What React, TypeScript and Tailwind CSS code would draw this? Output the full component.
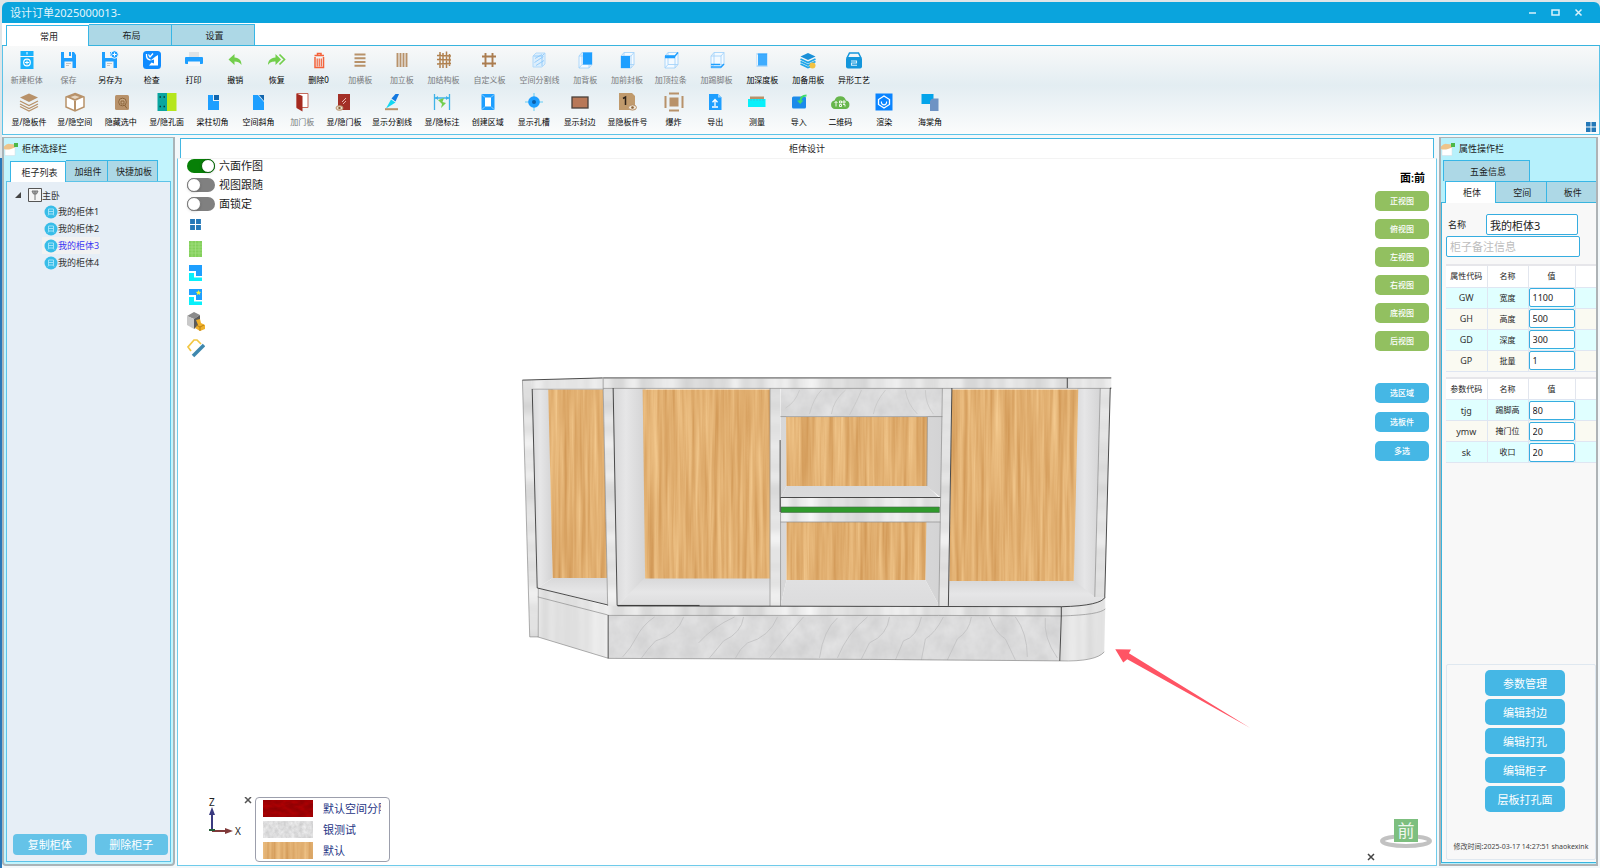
import { useState } from 'react'
import type { ReactNode } from 'react'
import clsx from 'clsx'

type Tool = {
  label: string
  icon: ReactNode
  size?: 'md' | 'lg' | 'xl' | 'xxl'
  disabled?: boolean
}

const BLUE = '#1e9fff'
const TAN = '#b8926a'

const cube = (
  <path
    d="M4 6h10v12H4zM7 2.500h10v12H7zM4 6l3-3.500M14 6l3-3.500M14 18l3-3.500M4 18l3-3.500"
    fill="#f4faff"
    stroke="#a5d4fb"
    strokeWidth="0.900"
  />
)

const floppy = (
  <>
    <path d="M2 2h3v6h8V2h2l2 3v13H2z" fill={BLUE} />
    <path d="M5.500 11.500h8V18h-8z" fill="#f5f5f5" />
    <path d="M7 13.500h5M7 15.500h3" stroke="#b5b5b5" strokeWidth="0.800" />
    <path d="M10 2h2v4h-2z" fill={BLUE} />
  </>
)

const topTools: Tool[] = [
  {
    label: '新建柜体',
    disabled: true,
    icon: (
      <>
        <path d="M3.500 1h13v5h-13zM3.500 7h13v12h-13z" fill="#1ab1fb" />
        <path d="M10 2v2.500" stroke="#fff" />
        <circle cx="10" cy="12.500" r="3.300" fill="none" stroke="#fff" strokeWidth="1.200" />
        <path d="M10 10.500v4M8 12.500h4" stroke="#fff" />
      </>
    ),
  },
  { label: '保存', disabled: true, icon: floppy },
  {
    label: '另存为',
    icon: (
      <>
        {floppy}
        <circle cx="14.500" cy="4.500" r="3.800" fill={BLUE} stroke="#f0f8ff" />
        <path d="M14.500 2.500v4M12.500 4.500h4" stroke="#fff" />
      </>
    ),
  },
  {
    label: '检查',
    icon: (
      <>
        <rect x="1" y="1" width="18" height="18" rx="3.500" fill="#0f8bff" />
        <path d="M4.500 4q-.500 5.500 4 6M6.500 4.500l1.500 2.500 3-3.500" fill="none" stroke="#fff" strokeWidth="1.300" />
        <path d="m8.500 10.500 5-4 2.500-1.500v10.500H7l2.500-3 2.500 1V9.500z" fill="#fff" />
      </>
    ),
  },
  {
    label: '打印',
    icon: (
      <>
        <path d="M5 2h10v5H5z" fill="#dfe3e6" />
        <rect x="1" y="7" width="18" height="7" rx="1" fill={BLUE} />
        <path d="M4 11.500h12V16H4z" fill="#f5f7f9" />
      </>
    ),
  },
  { label: '撤销', icon: <path d="M3.500 9.500 9.500 4v3.500c5 .500 7 3 7 7.500-2-3-4-3.500-7-3.500V15z" fill="#72ce4c" /> },
  {
    label: '恢复',
    icon: (
      <>
        <path d="M14 9.500 8.500 4v3.500c-5 .500-7.500 3-7.500 7.500 2-3 4-3.500 7.500-3.500V15z" fill="#72ce4c" />
        <path d="m12.500 4.500 5 5-5 5" fill="none" stroke="#72ce4c" strokeWidth="1.700" />
      </>
    ),
  },
  {
    label: '删除0',
    icon: (
      <>
        <path d="M6 7v10.500h8.500V7M5.500 5.500h9.500M8.500 5V3.500h3.500v1.500" fill="none" stroke="#f4623a" strokeWidth="1.500" />
        <path d="M8.200 8.500v8M10.250 8.500v8M12.300 8.500v8" stroke="#f4623a" strokeWidth="1.200" />
      </>
    ),
  },
  { label: '加横板', disabled: true, icon: <path d="M4.500 4.500h11M4.500 8.200h11M4.500 12h11M4.500 15.700h11" stroke={TAN} strokeWidth="1.900" /> },
  { label: '加立板', disabled: true, icon: <path d="M5.500 3v14M8.500 3v14M11.500 3v14M14.500 3v14" stroke={TAN} strokeWidth="1.900" /> },
  {
    label: '加结构板',
    disabled: true,
    icon: <path d="M3 5.500 17 6M3 9.500l14 .500M3 14l14-.500M6 2v16M9 3v15M12.500 1.500V18M15.500 4v12" stroke="#b0814f" strokeWidth="1.500" />,
  },
  { label: '自定义板', size: 'xl', disabled: true, icon: <path d="M6.500 3v14M13.500 3v14M3 6.500h14M3 13.500h14" stroke="#ab7d50" strokeWidth="1.900" /> },
  {
    label: '空间分割线',
    size: 'xl',
    disabled: true,
    icon: (
      <>
        <path d="M4 6l3-3h9v11l-3 3H4z" fill="#dceefc" stroke="#b3dafa" />
        <path d="M6 8.500l7-4M5.500 12.500l9-6M7 15.500l8-5M13 6v10M4.500 6H13l2.500-2.500" stroke="#8cc8fa" strokeWidth="0.900" />
      </>
    ),
  },
  {
    label: '加背板',
    disabled: true,
    icon: (
      <>
        {cube}
        <path d="M8 2.500h9v12H8z" fill={BLUE} />
      </>
    ),
  },
  {
    label: '加前封板',
    disabled: true,
    icon: (
      <>
        {cube}
        <path d="M4 6h9v12H4z" fill={BLUE} />
      </>
    ),
  },
  {
    label: '加顶拉条',
    size: 'lg',
    disabled: true,
    icon: (
      <>
        {cube}
        <path d="M4 6h10l3-3.500M4 7.500h10" fill="none" stroke={BLUE} strokeWidth="1.300" />
      </>
    ),
  },
  {
    label: '加踢脚板',
    size: 'lg',
    disabled: true,
    icon: (
      <>
        {cube}
        <path d="M4 17h10l3-3M4 14.500h9" fill="none" stroke={BLUE} strokeWidth="1.300" />
      </>
    ),
  },
  {
    label: '加深度板',
    size: 'lg',
    icon: (
      <>
        <path d="M4 3h12v2H4zM4 15h12v2H4z" fill="#b9dcf8" />
        <path d="M6 3.500h9v12H6z" fill={BLUE} opacity="0.850" />
        <path d="M4.500 3v14M15.500 3v14" stroke="#cfe7fa" />
      </>
    ),
  },
  {
    label: '加备用板',
    size: 'lg',
    icon: (
      <>
        <path d="m10 3 7.500 3.500-7.500 3.500L2.500 6.500z" fill="#1a90d8" />
        <path d="m2.500 9 7.500 3.500L17.500 9M2.500 11.500 10 15l7.500-3.500M2.500 14 10 17.500l5-2" fill="none" stroke="#1ea6e8" strokeWidth="1.700" />
        <circle cx="14.500" cy="15.500" r="3" fill="#f3c242" />
      </>
    ),
  },
  {
    label: '异形工艺',
    size: 'lg',
    icon: (
      <>
        <rect x="2" y="7" width="16" height="11.500" rx="2" fill="#1496db" />
        <path d="M3 8 5.500 3h9L17 8" fill="none" stroke="#1496db" strokeWidth="1.500" />
        <path d="M7 11h5.500v2H7.500v2.300H13" fill="none" stroke="#d8effb" strokeWidth="1.100" />
      </>
    ),
  },
]

const bottomTools: Tool[] = [
  {
    label: '显/隐板件',
    size: 'lg',
    icon: (
      <>
        <path d="m10 1.500 9 4-9 4.500-9-4.500z" fill={TAN} />
        <path d="m1 9 9 4.500L19 9M1 12l9 4.500 9-4.500M1 14.500 10 19l9-4.500" fill="none" stroke={TAN} strokeWidth="1.300" />
      </>
    ),
  },
  {
    label: '显/隐空间',
    size: 'lg',
    icon: (
      <>
        <path d="m10 1.500 9 3.500v10l-9 4-9-4V5z" fill="#fff" stroke={TAN} strokeWidth="1.500" />
        <path d="m10 1.500 9 3.500-9 4-9-4z" fill={TAN} />
        <path d="M10 9v10" stroke={TAN} strokeWidth="2" />
        <path d="m10 3.500 4.500 1.500L10 7 5.500 5z" fill="#e6d5c0" />
      </>
    ),
  },
  {
    label: '隐藏选中',
    size: 'lg',
    icon: (
      <>
        <rect x="4" y="3" width="14" height="15" rx="1.500" fill={TAN} />
        <circle cx="11.500" cy="10" r="3.800" fill="#c9a984" stroke="#8a6238" />
        <path d="m13.500 13 2.500 3.500M10 9v3h3V9z" stroke="#8a6238" fill="none" />
      </>
    ),
  },
  {
    label: '显/隐孔面',
    size: 'lg',
    icon: (
      <>
        <path d="M.500 1H10v18H.500z" fill="#0aa5a0" />
        <path d="M10 1h9.500v18H10z" fill="#b5e61d" />
        <path d="M2.500 5H4M6.500 5H8M2.500 14.500H4M6.500 14.500H8" stroke="#063c3a" strokeWidth="1.500" />
      </>
    ),
  },
  {
    label: '梁柱切角',
    size: 'lg',
    icon: (
      <>
        <path d="M5 3h5v6h6v9H5z" fill={BLUE} />
        <path d="M11 3h5v5h-5z" fill="#1266ad" />
      </>
    ),
  },
  {
    label: '空间斜角',
    size: 'lg',
    icon: (
      <>
        <path d="M5 3h5l6 7v8H5z" fill={BLUE} />
        <path d="M11 3h5v6z" fill="#1266ad" />
      </>
    ),
  },
  {
    label: '加门板',
    disabled: true,
    icon: (
      <>
        <path d="M5 1.500h11v14H5z" fill="#fff" stroke="#c46a5c" />
        <path d="M4.500 1.500 10.500 4v15.500L4.500 16z" fill="#a52a20" />
      </>
    ),
  },
  {
    label: '显/隐门板',
    icon: (
      <>
        <path d="M4 2h12v16H4z" fill="#a33027" />
        <path d="m8 10 4-4M9 12l3-3" stroke="#e6b5ae" />
        <ellipse cx="5.500" cy="16" rx="3.500" ry="2.300" fill="#e9ddcc" stroke={TAN} />
        <circle cx="5.500" cy="16" r="1.200" fill="#8a6238" />
      </>
    ),
  },
  {
    label: '显示分割线',
    size: 'xxl',
    icon: (
      <>
        <path d="M4 16.500 9 7.500l4.500 3z" fill="#13d8f2" />
        <path d="m9.500 6.500 4-4.500H17l-3.500 7.500z" fill="#1278e0" />
        <path d="M3 17.200h13" stroke={TAN} strokeWidth="2" />
      </>
    ),
  },
  {
    label: '显/隐标注',
    size: 'lg',
    icon: (
      <>
        <path d="M2.500 2v16M17.500 2v16M3 6h14" stroke="#3fb2e8" strokeWidth="1.300" />
        <path d="m3 6 3-2v4zM17 6l-3-2v4z" fill="#3fb2e8" />
        <path d="m6 8 6-2-1.500 4L14 11l-5 5 1-4z" fill="#72ce4c" />
      </>
    ),
  },
  {
    label: '创建区域',
    size: 'lg',
    icon: (
      <>
        <rect x="3.500" y="2" width="13" height="16" rx="1" fill={BLUE} />
        <path d="M7 5.500h6v9H7z" fill="#fff" />
        <path d="m4 2.500 3 3M16 2.500l-3 3M4 17.500l3-3M16 17.500l-3-3" stroke="#8fd2ff" />
      </>
    ),
  },
  {
    label: '显示孔槽',
    size: 'lg',
    icon: (
      <>
        <path d="M10 1v18M1 10h18" stroke="#64cdf5" />
        <circle cx="10" cy="10" r="5.800" fill="#1e9fff" />
        <circle cx="10" cy="10" r="2" fill="#0a5ea8" />
      </>
    ),
  },
  { label: '显示封边', size: 'lg', icon: <rect x="2" y="5" width="16" height="11" fill="#b87858" stroke="#49403b" strokeWidth="1.300" /> },
  {
    label: '显隐板件号',
    size: 'xl',
    icon: (
      <>
        <path d="M1 1h13l3 3v14H1z" fill="#c09a6c" />
        <path d="m5 6.500 2.500-1.500v8" fill="none" stroke="#2b2118" strokeWidth="1.500" />
        <ellipse cx="14.500" cy="15.500" rx="4" ry="2.600" fill="#efe4d4" stroke={TAN} />
        <circle cx="14.500" cy="15.500" r="1.300" fill="#8a6238" />
      </>
    ),
  },
  {
    label: '爆炸',
    icon: <path d="M5.500 5.500h9v9h-9zM5 .500h10v2H5zM5 17.500h10v2H5zM.500 4h2v12h-2zM17.500 4h2v12h-2z" fill={TAN} />,
  },
  {
    label: '导出',
    icon: (
      <>
        <path d="M4 2h9l3.500 3.500V18H4z" fill={BLUE} />
        <path d="M13 2v3.500h3.500z" fill="#9ad3ff" />
        <path d="M10 14V8M7.500 10.200 10 7.500l2.500 2.700M7 15h6" fill="none" stroke="#fff" strokeWidth="1.300" />
      </>
    ),
  },
  {
    label: '测量',
    icon: (
      <>
        <path d="M3 4.500h14V8H3z" fill={TAN} />
        <path d="M1 7h17.500v8H1z" fill="#08f0fa" />
        <path d="M4 7v2M7 7v2M10 7v2M13 7v2M16 7v2" stroke="#38bfcf" strokeWidth="0.800" />
      </>
    ),
  },
  {
    label: '导入',
    icon: (
      <>
        <rect x="3" y="4.500" width="14" height="12" rx="1.500" fill="#1b8bea" />
        <path d="M17.500 3.500c-4 0-6 1.500-6 5.500" fill="none" stroke="#3fdc6a" strokeWidth="2" />
        <path d="M8 8.500h6.500L11.200 12z" fill="#3fdc6a" />
      </>
    ),
  },
  {
    label: '二维码',
    icon: (
      <>
        <path d="M5 17a4.300 4.300 0 0 1-.500-8.500A6 6 0 0 1 16 8.500 4.300 4.300 0 0 1 15.500 17z" fill="#67b64c" />
        <path d="M6 14.500V9.500L4.500 11M6 9.500 7.500 11M9.500 9h2v2h-2zM13 9h2v2h-2zM9.500 12.500h2v2h-2zM13 12.500h2v2" fill="none" stroke="#fff" strokeWidth="0.900" />
      </>
    ),
  },
  {
    label: '渲染',
    size: 'lg',
    icon: (
      <>
        <path d="M1.500 1.500h17v17h-17z" fill="#0a84ff" />
        <path d="m10 4 5.500 3.500v5L10 16l-5.500-3.500v-5z" fill="none" stroke="#fff" strokeWidth="1.300" />
        <path d="M7.500 9.500a2.600 2.600 0 1 0 5 0" fill="none" stroke="#fff" strokeWidth="1.200" />
      </>
    ),
  },
  {
    label: '海棠角',
    size: 'lg',
    icon: (
      <>
        <path d="M1.500 2h12v10h-12z" fill="#04a4ea" />
        <path d="M10 9q1-3 4-2.500h4.500v12.500H10z" fill="#6e93c4" />
      </>
    ),
  },
]

const grow = { md: 'flex-[10]', lg: 'flex-[11]', xl: 'flex-[12]', xxl: 'flex-[13]' }

const views = ['正视图', '俯视图', '左视图', '右视图', '底视图', '后视图']
const picks = ['选区域', '选板件', '多选']
const actions = ['参数管理', '编辑封边', '编辑打孔', '编辑柜子', '层板打孔面']

const attributes = [
  ['GW', '宽度', '1100'],
  ['GH', '高度', '500'],
  ['GD', '深度', '300'],
  ['GP', '批量', '1'],
]
const params = [
  ['tjg', '踢脚高', '80'],
  ['ymw', '掩门位', '20'],
  ['sk', '收口', '20'],
]

function ToolButton({ tool }: { tool: Tool }) {
  return (
    <button type="button" disabled={tool.disabled} className={clsx('flex min-w-0 flex-col items-center', grow[tool.size ?? 'md'])}>
      <svg viewBox="0 0 20 20" className="size-5" fill="none" aria-hidden>
        {tool.icon}
      </svg>
      <span className={clsx('mt-1 text-[8px] leading-3 whitespace-nowrap', tool.disabled ? 'text-[#77797b]' : 'text-black')}>{tool.label}</span>
    </button>
  )
}

function GridIcon({ className }: { className: string }) {
  return (
    <svg viewBox="0 0 12 12" className={className} aria-hidden>
      <path d="M1 1h4.500v4.500H1zM6.500 1H11v4.500H6.500zM1 6.500h4.500V11H1zM6.500 6.500H11V11H6.500z" fill="#2478b8" />
    </svg>
  )
}

function HandIcon() {
  return (
    <svg viewBox="0 0 16 14" className="h-[14px] w-4" aria-hidden>
      <path d="M1 5h10v8.500H1z" fill="#fff" stroke="#d6dde2" strokeWidth="0.500" />
      <path d="M0 4.500q3-3.500 6-2.500l5 .500v3L7 7Q3 8 0 7z" fill="#eec48a" />
      <path d="M10 1h4v4h-4z" fill="#4cb848" />
    </svg>
  )
}

function PanelHeader({ title }: { title: string }) {
  return (
    <header className="flex h-[21px] shrink-0 items-center gap-[2px] text-[9px]">
      <HandIcon />
      <h2>{title}</h2>
    </header>
  )
}

function Tab({ active, className, children, onClick }: { active?: boolean; className: string; children: ReactNode; onClick?: () => void }) {
  return (
    <button
      type="button"
      role="tab"
      aria-selected={!!active}
      onClick={onClick}
      className={clsx('border border-b-0 border-[#38b6e6] pl-[3px] text-[9px]', active ? '-mb-px bg-white' : 'bg-[#add8e6]', className)}
    >
      {children}
    </button>
  )
}

function Toggle({ label, initial = false }: { label: string; initial?: boolean }) {
  const [on, setOn] = useState(initial)
  return (
    <label className="flex h-[19px] items-center gap-1 text-[11px]">
      <input
        type="checkbox"
        role="switch"
        checked={on}
        onChange={() => setOn(!on)}
        className="h-[14px] w-7 appearance-none rounded-full bg-[#808080] before:block before:size-[14px] before:rounded-full before:border before:border-[#777] before:bg-white before:shadow-sm checked:bg-[#078007] checked:before:translate-x-[14px] checked:before:border-[#056005]"
      />
      {label}
    </label>
  )
}

function TreeIcon() {
  return (
    <svg viewBox="0 0 14 14" className="size-[14px]" aria-hidden>
      <circle cx="7" cy="7" r="6.500" fill="#38bde8" />
      <path d="M4.500 4h5v5h-5zM4.500 6.500h5M4 10.500 5 9M10 10.500 9 9" fill="none" stroke="#a9e6fa" strokeWidth="0.900" />
    </svg>
  )
}

// Grain and marble textures shared by the cabinet and the legend swatches
function Textures() {
  return (
    <svg className="absolute size-0" aria-hidden>
      <defs>
        <filter id="wood" x="0" y="0" width="100%" height="100%" colorInterpolationFilters="sRGB">
          <feTurbulence type="fractalNoise" baseFrequency="0.220 0.008" numOctaves="3" seed="4" />
          <feColorMatrix values="0.180 0 0 0 0.795  0.260 0 0 0 0.560  0.300 0 0 0 0.295  0 0 0 0 1" />
          <feComposite in2="SourceGraphic" operator="in" />
        </filter>
        <filter id="rail" x="0" y="0" width="100%" height="100%" colorInterpolationFilters="sRGB">
          <feTurbulence type="fractalNoise" baseFrequency="0.060 0.001" numOctaves="2" seed="9" />
          <feColorMatrix values="0.200 0 0 0 0.785  0.200 0 0 0 0.785  0.200 0 0 0 0.785  0 0 0 0 1" />
          <feComposite in2="SourceGraphic" operator="in" />
        </filter>
        <filter id="post" x="0" y="0" width="100%" height="100%" colorInterpolationFilters="sRGB">
          <feTurbulence type="fractalNoise" baseFrequency="0.001 0.040" numOctaves="2" seed="3" />
          <feColorMatrix values="0.200 0 0 0 0.785  0.200 0 0 0 0.785  0.200 0 0 0 0.785  0 0 0 0 1" />
          <feComposite in2="SourceGraphic" operator="in" />
        </filter>
        <filter id="marble" x="0" y="0" width="100%" height="100%" colorInterpolationFilters="sRGB">
          <feTurbulence type="fractalNoise" baseFrequency="0.060 0.050" numOctaves="4" seed="7" />
          <feColorMatrix values="0.100 0 0 0 0.805  0.100 0 0 0 0.805  0.100 0 0 0 0.808  0 0 0 0 1" />
          <feComposite in2="SourceGraphic" operator="in" />
        </filter>
        <filter id="speckle" x="0" y="0" width="100%" height="100%" colorInterpolationFilters="sRGB">
          <feTurbulence type="fractalNoise" baseFrequency="0.250 0.200" numOctaves="3" seed="7" />
          <feColorMatrix values="0.200 0 0 0 0.765  0.200 0 0 0 0.765  0.200 0 0 0 0.768  0 0 0 0 1" />
          <feComposite in2="SourceGraphic" operator="in" />
        </filter>
        <filter id="red" x="0" y="0" width="100%" height="100%" colorInterpolationFilters="sRGB">
          <feTurbulence type="fractalNoise" baseFrequency="0.120 0.250" numOctaves="3" seed="2" />
          <feColorMatrix values="0.200 0 0 0 0.520  0 0 0 0 0  0 0 0 0 0.010  0 0 0 0 1" />
          <feComposite in2="SourceGraphic" operator="in" />
        </filter>
      </defs>
    </svg>
  )
}

function Cabinet() {
  return (
    <svg viewBox="178 159 1259 706" className="absolute inset-0 size-full" role="img" aria-label="我的柜体3">
      <defs>
        <linearGradient id="side" x1="0" x2="1">
          <stop offset="0" stopColor="#d6d6d7" />
          <stop offset="0.400" stopColor="#e6e6e7" />
          <stop offset="1" stopColor="#d3d3d4" />
        </linearGradient>
        <linearGradient id="floor" x1="0" x2="0" y1="0" y2="1">
          <stop offset="0" stopColor="#d8d8d9" />
          <stop offset="0.500" stopColor="#e6e6e7" />
          <stop offset="1" stopColor="#dcdcdd" />
        </linearGradient>
      </defs>

      {/* cavities */}
      <g fill="url(#side)">
        <path d="M532 389h21v189l-15 10z" />
        <path d="M613 388h33v190l-28 28z" />
        <path d="M781 416h6v70l-6 12zM927 416h16l-1 82-15-12zM781 522h6v58l-6 26zM926 522h16l-2 84-14-26z" />
        <path d="M1078 388h24l-6 213-22-20z" />
      </g>
      <g fill="url(#floor)">
        <path d="M553 578h55v27l-70-17z" />
        <path d="M645 578h126v28H618z" />
        <path d="M787 486h141l12 12H781zM787 580h139l14 26H781z" />
        <path d="M949 581h126l21 16h10q-2 10-44 10H949z" />
      </g>
      <g filter="url(#wood)">
        <path d="M548.500 389.500h55l4 188.500H553z" />
        <path d="M643 389.500h128v189H645.500z" />
        <path d="M786.500 417H928l-.500 69H787zM787 522h140l-1 58H787z" />
        <path d="M952.500 389.500H1079L1074.500 581H950z" />
      </g>

      {/* frame */}
      <g filter="url(#post)">
        <path d="M522.700 380h9.300l6.500 257h-8.500zM603.500 388h10l4 218H608zM770.500 388h10l.500 218h-10z" />
        <path d="M943 388h9.500L949 607h-9.500zM1101 388h10l-5.500 209h-10z" />
      </g>
      <g filter="url(#rail)">
        <path d="M532 380l71.500-2.500H1112V388.500H532z" />
        <path d="M781 497.500h159.500V522H781z" />
        <path d="m538 588 70 18h454q40-1 44-9v12q-4 6-44 7H608l-70-19z" />
        <path d="m538 597 70 18 1 43.500L538 637zM1062 616q38-1 44-7l-1 43q-6 9-44 9z" />
      </g>
      <g filter="url(#marble)">
        <path d="M781 388h162l-.500 28.500H781zM609 616h453l-1.500 45L609 658.500z" />
      </g>
      <path
        d="M655 617q-12 8-18 20t-14 20M684 617q-6 18-28 24-8 8-14 17M735 617q-22 10-36 26M744 617q-2 16-20 24l-14 17M778 617q-8 20-30 26-8 6-12 15M804 617q-16 18-34 41M838 618q-14 12-18 40M868 617q-20 16-30 41M890 617q-2 18-20 26l-8 16M922 617q-4 20-18 24l-8 19M944 617q-8 16-18 22l-4 21M972 617q-2 14-14 22l-10 21M990 617q6 16 16 22l10 21M1016 617q12 16 12 40M1046 618q-2 20 12 40"
        fill="none"
        stroke="#c3c3c4"
        strokeWidth="0.900"
      />
      <path d="M800 390q-4 12-14 18M822 390q-8 8-12 24M846 390q-12 10-14 24M862 390q-4 10-12 25M886 390q-10 12-12 24M906 390q2 14 12 24M926 390q0 14 8 24" fill="none" stroke="#c6c6c7" strokeWidth="0.800" />
      <path d="M781.500 507H940v5.500H781.500z" fill="#309a2c" stroke="#48694a" strokeWidth="0.600" />

      {/* outlines */}
      <g fill="none" stroke="#8c8c8c" strokeWidth="0.700">
        <path d="M532 389h72M603.500 377.500V388M603.500 388.300H1112M781 416.500h162M781 522h160M538 597l70 18M609 615.500h330l123 .500q38-1 44-7M538 637l71 21.500L870 659.500l190.500 1.500q36 1 44.500-9M538.500 588v49" />
        <path d="M928 417l-.500 69M770.500 388v218M781 498v108M603.500 388l4.500 218M522.700 380l7.300 257h8.500M943 388l-3.500 218M1101 388l-5.500 209" />
      </g>
      <path d="M603.500 377.800H1112" stroke="#959595" strokeWidth="1.600" />
      <g fill="none" stroke="#222" strokeWidth="0.800">
        <path d="M522.700 380 603 377.800M532.500 389l5 199 70.500 17M613.500 388l4 217.500H700M608.500 615v43.500M780.600 440v72M781 497.500h160M952.500 388 949 606M1068 378v10M1112 388h-1l-5.500 209" />
        <path d="M618 606l444 .800q40-1 44-9.800M1062 607v9l-1.500 45" />
      </g>

      <path d="m1116 649.300 15.700.400-2 3.600L1250.700 728 1128 659.300l-4 3.400z" fill="#ff5464" />
    </svg>
  )
}

function Axis() {
  return (
    <svg viewBox="0 0 40 42" className="h-[42px] w-10" aria-hidden>
      <path d="M8 34V16" stroke="#3a3a80" strokeWidth="2" />
      <path d="m8 10 3 8H5z" fill="#3a3a80" />
      <path d="M8 34h15" stroke="#803a3a" strokeWidth="2" />
      <path d="m29 34-8-3v6z" fill="#803a3a" />
      <path d="M5 33h6" stroke="#245c38" strokeWidth="2" />
      <text x="5" y="9" fontSize="10" fill="#222">Z</text>
      <text x="31" y="38" fontSize="10" fill="#222">X</text>
    </svg>
  )
}

function Legend() {
  const rows = [
    ['默认空间分隔', 'url(#red)'],
    ['银测试', 'url(#speckle)'],
    ['默认', 'url(#wood)'],
  ]
  return (
    <div className="w-[135px] rounded-sm border border-[#9c9fac] bg-white pl-[7px]">
      {rows.map(([name, fill]) => (
        <div key={name} className="flex h-[21px] items-center gap-[10px]">
          <svg className="h-[17px] w-[50px] shrink-0" aria-hidden>
            <rect width="50" height="17" filter={fill} />
          </svg>
          <span className="w-[58px] overflow-hidden text-[11px] leading-[20px] whitespace-nowrap text-[#1f3686]">{name}</span>
        </div>
      ))}
    </div>
  )
}

function ViewTools() {
  return (
    <div className="mt-[5px] flex flex-col items-start gap-3 pl-[2px]">
      <button type="button" aria-label="布局"><GridIcon className="size-[13px]" /></button>
      <button type="button" aria-label="网格">
        <svg viewBox="0 0 13 16" className="h-4 w-[13px] -my-[2px]" aria-hidden>
          <path d="M0 0h13v16H0z" fill="#84d05c" />
          <path d="M0 3h13M0 6h13M0 9h13M0 12h13M3 0v16M6.500 0v16M10 0v16" stroke="#a9e086" strokeWidth="0.600" />
        </svg>
      </button>
      {[false, true].map((star) => (
        <button key={String(star)} type="button" aria-label={star ? '新建组合' : '组合'}>
          <svg viewBox="0 0 13 16" className="h-4 w-[13px] -my-[2px]" aria-hidden>
            <path d="M0 0h13v11H7V6H0z" fill={BLUE} />
            <path d="M0 8h5v4.500h8V16H0z" fill="#08f0fa" />
            {star && <path d="m9.500 1 .800 1.700 1.900.200-1.400 1.300.400 1.900-1.700-1-1.700 1 .400-1.900-1.400-1.300 1.900-.200z" fill="#f6f23a" />}
          </svg>
        </button>
      ))}
      <button type="button" aria-label="模型">
        <svg viewBox="0 -1 18 20" className="-mx-[2px] -my-[3px] h-5 w-[18px]" aria-hidden>
          <path d="m0 3 7-4 6 3-6 4z" fill="#8b8b8b" />
          <path d="m0 3 7 3v10l-7-4z" fill="#c9c9c9" />
          <path d="m7 6 6-4v9l-6 5z" fill="#5b5b5b" />
          <path d="m9 7 4-1 1 4 4 2v4l-5 2-5-3 3-3z" fill="#efb02a" />
          <path d="m9 12 4 2 4-2M13 14v4" fill="none" stroke="#a87412" strokeWidth="0.800" />
        </svg>
      </button>
      <button type="button" aria-label="测量边">
        <svg viewBox="0 -1 18 20" className="-mx-[2px] -my-[3px] h-5 w-[18px]" aria-hidden>
          <path d="M4 12 1 8l6-7h3l4 4" fill="none" stroke="#f2c744" strokeWidth="1.700" />
          <path d="m6 17 11-11" stroke="#3f88ae" strokeWidth="3.500" />
        </svg>
      </button>
    </div>
  )
}

function AttributeTable({ codeTitle, rows }: { codeTitle: string; rows: string[][] }) {
  return (
    <table className="w-full table-fixed border-collapse border-t-2 border-[#e6e6ea] text-center text-[9px]">
      <colgroup>
        <col className="w-[41px]" />
        <col className="w-[41px]" />
        <col className="w-[47px]" />
        <col />
      </colgroup>
      <thead>
        <tr className="h-[22px] bg-white text-[8px]">
          <th className="border-r border-[#e2e6ee] font-normal">{codeTitle}</th>
          <th className="border-r border-[#e2e6ee] font-normal">名称</th>
          <th className="border-r border-[#e2e6ee] font-normal">值</th>
          <td />
        </tr>
      </thead>
      <tbody>
        {rows.map(([code, name, value]) => (
          <tr key={code} className="h-[21px] border-y border-[#dfe6f2] odd:bg-[#e0ffff] even:bg-[#fafaf2]">
            <td className="border-r border-[#dfe6f2] p-0 text-[#333]">{code}</td>
            <td className="border-r border-[#dfe6f2] p-0 text-[8px]">{name}</td>
            <td className="border-r border-[#dfe6f2] p-0">
              <input
                aria-label={name}
                defaultValue={value}
                className="block h-[19px] w-full rounded-xs border border-[#36ade0] bg-white px-[3px] text-[9px] text-[#222]"
              />
            </td>
            <td />
          </tr>
        ))}
      </tbody>
    </table>
  )
}

export default function App() {
  const [ribbonTab, setRibbonTab] = useState('常用')
  const [selected, setSelected] = useState('我的柜体3')

  return (
    <div className="flex h-screen flex-col bg-[linear-gradient(to_bottom,#dfe5e8_158px,#2a78b8_158px)] pt-[2px] pl-[2px] font-['Noto_Sans','Noto_Sans_CJK_SC',sans-serif] text-[9px] leading-none text-[#1c1c1c] [&_button]:cursor-pointer">
      <Textures />
      <header className="flex h-[21px] shrink-0 items-center justify-between rounded-t-md bg-[#0aa4dd] pr-[17px] pl-2 text-white">
        <h1 className="text-[11px] text-[#e2f4fb]">设计订单2025000013-</h1>
        <div className="flex gap-[14px]">
          {['M1 5h7', 'M1 2h7v5H1z', 'M1.500 1.500l6 6M7.500 1.500l-6 6'].map((d, i) => (
            <button key={d} type="button" aria-label={['最小化', '最大化', '关闭'][i]}>
              <svg viewBox="0 0 9 9" className="size-[9px]" fill="none" stroke="#d9f2fb" strokeWidth="1.500" aria-hidden>
                <path d={d} />
              </svg>
            </button>
          ))}
        </div>
      </header>

      <div className="flex h-[23px] shrink-0 items-end border-b border-[#38b4de] bg-white pl-1" role="tablist">
        {['常用', '布局', '设置'].map((name) => (
          <Tab key={name} active={ribbonTab === name} onClick={() => setRibbonTab(name)} className="relative h-[21px] w-[83px] not-first:border-l-0">
            {name}
          </Tab>
        ))}
      </div>

      <nav className="relative flex h-[89px] shrink-0 flex-col gap-[6px] border-x border-b border-[#5cc3e8] bg-linear-to-b from-[#f8f9f9] via-[#e3edf2] via-45% to-[#fbfcfc] pt-1 pl-[3px]">
        <div className="flex w-[871px]">
          {topTools.map((tool) => <ToolButton key={tool.label} tool={tool} />)}
        </div>
        <div className="flex w-[947px]">
          {bottomTools.map((tool) => <ToolButton key={tool.label} tool={tool} />)}
        </div>
        <button type="button" aria-label="全部工具" className="absolute right-[2px] bottom-px">
          <GridIcon className="size-3" />
        </button>
      </nav>

      <main className="flex min-h-0 flex-1 gap-[2px] bg-[#f3f8fa] pt-[2px] pr-[2px] pb-[2px]">
        <aside className="flex w-[173px] shrink-0 flex-col rounded-b-sm border-2 border-t border-[#a9b4b8] bg-[#c2f4fd]">
          <PanelHeader title="柜体选择栏" />
          <div className="flex h-[22px] shrink-0 items-end pl-[6px]" role="tablist">
            <Tab active className="relative h-[21px] w-14">柜子列表</Tab>
            <Tab className="h-[21px] w-[42px] border-l-0">加组件</Tab>
            <Tab className="h-[21px] w-[50px] border-l-0">快捷加板</Tab>
          </div>
          <div className="mx-[2px] mb-[2px] flex min-h-0 flex-1 flex-col justify-between border border-[#5cc3e8] bg-[#e6eef6]">
            <div className="pt-[5px] pl-2 text-[#333]">
              <div className="flex h-4 items-center">
                <svg viewBox="0 0 6 6" className="mr-[7px] size-[6px]" aria-hidden>
                  <path d="M6 0v6H0z" fill="#444" />
                </svg>
                <svg viewBox="0 0 14 14" className="size-[14px]" aria-hidden>
                  <path d="M.500.500h13v13H.500z" fill="#f5f5f5" stroke="#555" />
                  <path d="M4 3h6L8.500 6h-3zM7 3v9" fill="#aaa" stroke="#777" />
                </svg>
                主卧
              </div>
              <ul className="pl-[27px]">
                {['我的柜体1', '我的柜体2', '我的柜体3', '我的柜体4'].map((name) => (
                  <li key={name}>
                    <button
                      type="button"
                      onClick={() => setSelected(name)}
                      className={clsx('flex h-[17px] items-center pr-px pl-[2px]', selected === name && 'bg-[#f2f2f2] text-[#3a35f2]')}
                    >
                      <TreeIcon />
                      {name}
                    </button>
                  </li>
                ))}
              </ul>
            </div>
            <div className="flex gap-2 pr-[2px] pb-[6px] pl-[6px] text-[11px] text-white">
              <button type="button" className="h-[21px] flex-1 rounded-[4px] bg-[#65c3e8]">复制柜体</button>
              <button type="button" className="h-[21px] flex-1 rounded-[4px] bg-[#65c3e8]">删除柜子</button>
            </div>
          </div>
        </aside>

        <section className="flex min-w-0 flex-1 flex-col pt-px">
          <h2 className="mx-[3px] flex h-5 shrink-0 items-center justify-center border border-b-0 border-[#43b7e2] bg-white">柜体设计</h2>
          <div className="relative flex min-h-0 flex-1 justify-between border border-[#6fcbea] border-t-[#f3f3f3] bg-white">
            <Cabinet />
            <div className="relative flex flex-col justify-between">
              <div className="pl-[9px]">
                <div className="-mt-[3px]">
                  <Toggle label="六面作图" initial />
                  <Toggle label="视图跟随" />
                  <Toggle label="面锁定" />
                </div>
                <ViewTools />
              </div>
              <div className="flex items-start pb-[3px] pl-[26px]">
                <Axis />
                <button type="button" aria-label="关闭图例" className="mr-[3px]">
                  <svg viewBox="0 0 8 8" className="size-2" stroke="#555" strokeWidth="1.500" aria-hidden>
                    <path d="m1 0 6 6M7 0 1 6" />
                  </svg>
                </button>
                <Legend />
              </div>
            </div>
            <div className="relative flex flex-col justify-between pr-[7px]">
              <div className="flex flex-col items-end pt-3">
                <p className="mb-[6px] pr-1 text-[11px] leading-[14px] font-semibold text-black">面:前</p>
                <div className="flex flex-col gap-2 text-[8px] font-medium text-white">
                  {views.map((name) => (
                    <button key={name} type="button" className="h-5 w-[54px] rounded-[5px] bg-[#92c060]">{name}</button>
                  ))}
                </div>
                <div className="mt-8 flex flex-col gap-[9px] text-[8px] font-medium text-white">
                  {picks.map((name) => (
                    <button key={name} type="button" className="h-5 w-[54px] rounded-[5px] bg-[#45b7e5]">{name}</button>
                  ))}
                </div>
              </div>
              <div className="-mr-1 flex items-end pb-1">
                <button type="button" aria-label="关闭罗盘" className="mr-1">
                  <svg viewBox="0 0 8 8" className="size-2" stroke="#444" strokeWidth="1.500" aria-hidden>
                    <path d="m1 1 6 6M7 1 1 7" />
                  </svg>
                </button>
                <svg viewBox="0 0 54 42" className="h-[42px] w-[54px]" role="img" aria-label="前">
                  <ellipse cx="27" cy="22" rx="24" ry="5" fill="none" stroke="#c2c2c2" strokeWidth="4" />
                  <path d="M15 0h24v23H15z" fill="#7dbf7f" />
                  <text x="27" y="18" fontSize="17" textAnchor="middle" fill="#eef7ee">前</text>
                </svg>
              </div>
            </div>
          </div>
        </section>

        <aside className="flex w-[159px] shrink-0 flex-col border-2 border-t border-[#aeb3b6] bg-[#b7f1fc]">
          <PanelHeader title="属性操作栏" />
          <div className="flex pt-px pl-[2px]">
            <Tab className="h-[21px] w-[87px]">五金信息</Tab>
          </div>
          <div className="flex pl-1" role="tablist">
            <Tab active className="relative h-[22px] w-[51px]">柜体</Tab>
            <Tab className="h-[21px] flex-1 border-l-0">空间</Tab>
            <Tab className="h-[21px] flex-1 border-x-0">板件</Tab>
          </div>
          <div className="mb-px flex min-h-0 flex-1 flex-col border border-r-0 border-[#38b4de] bg-[#f8f8f8] pt-[11px] pl-1">
            <div className="flex items-center pl-[2px]">
              <label htmlFor="cabinet-name" className="w-[38px]">名称</label>
              <input
                id="cabinet-name"
                value={selected}
                onChange={(e) => setSelected(e.target.value)}
                className="h-[21px] w-[92px] rounded-xs border border-[#36ade0] bg-white px-[3px] text-[11px] text-[#222]"
              />
            </div>
            <input
              aria-label="柜子备注信息"
              placeholder="柜子备注信息"
              className="mt-px h-[21px] w-[134px] rounded-xs border border-[#36ade0] bg-white px-[3px] text-[11px] placeholder:text-[#bdbdbd]"
            />
            <div className="mt-[7px] flex flex-col gap-[5px]">
              <AttributeTable codeTitle="属性代码" rows={attributes} />
              <AttributeTable codeTitle="参数代码" rows={params} />
            </div>
            <div className="mt-auto mb-[2px] flex flex-col items-center gap-[3px] rounded-xs border border-[#dfe8f0] pt-[5px] pl-[8px]">
              {actions.map((name) => (
                <button key={name} type="button" className="h-[26px] w-20 rounded-[5px] bg-[#45b7e5] text-[11px] text-white">{name}</button>
              ))}
              <p className="mt-6 mb-1 -ml-2 text-[7px] leading-4 whitespace-nowrap text-[#444]">修改时间:2025-03-17 14:27:51 shaokexink</p>
            </div>
          </div>
        </aside>
      </main>
    </div>
  )
}
